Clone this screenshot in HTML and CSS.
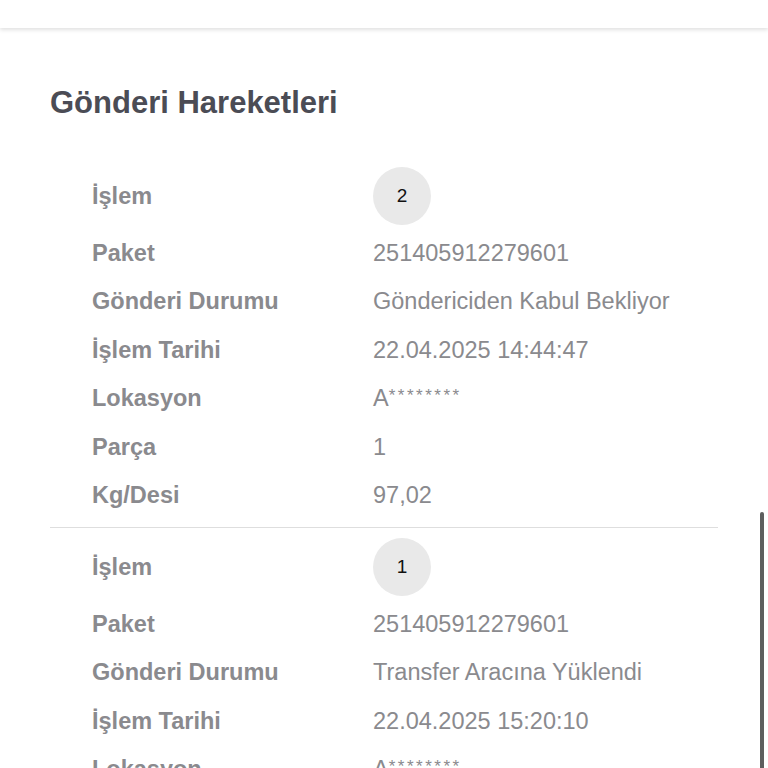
FILE: index.html
```html
<!DOCTYPE html>
<html lang="tr">
  <head>
    <meta charset="UTF-8" />
    <title>Gönderi Hareketleri</title>
    <link rel="stylesheet" href="styles.css">
  </head>
  <body>
    <div class="topbar"></div>

    <div class="content">
      <h1 class="title">Gönderi Hareketleri</h1>

      <!-- Hareket 2 -->
      <div class="move">
        <div class="row row-step">
          <div class="label">İşlem</div>
          <div class="value"><span class="step">2</span></div>
        </div>
        <div class="row">
          <div class="label">Paket</div>
          <div class="value">251405912279601</div>
        </div>
        <div class="row">
          <div class="label">Gönderi Durumu</div>
          <div class="value">Göndericiden Kabul Bekliyor</div>
        </div>
        <div class="row">
          <div class="label">İşlem Tarihi</div>
          <div class="value">22.04.2025 14:44:47</div>
        </div>
        <div class="row">
          <div class="label">Lokasyon</div>
          <div class="value">A<span class="mask">********</span></div>
        </div>
        <div class="row">
          <div class="label">Parça</div>
          <div class="value">1</div>
        </div>
        <div class="row">
          <div class="label">Kg/Desi</div>
          <div class="value">97,02</div>
        </div>
      </div>

      <!-- Hareket 1 -->
      <div class="move">
        <div class="row row-step">
          <div class="label">İşlem</div>
          <div class="value"><span class="step">1</span></div>
        </div>
        <div class="row">
          <div class="label">Paket</div>
          <div class="value">251405912279601</div>
        </div>
        <div class="row">
          <div class="label">Gönderi Durumu</div>
          <div class="value">Transfer Aracına Yüklendi</div>
        </div>
        <div class="row">
          <div class="label">İşlem Tarihi</div>
          <div class="value">22.04.2025 15:20:10</div>
        </div>
        <div class="row">
          <div class="label">Lokasyon</div>
          <div class="value">A<span class="mask">********</span></div>
        </div>
        <div class="row">
          <div class="label">Parça</div>
          <div class="value">1</div>
        </div>
        <div class="row">
          <div class="label">Kg/Desi</div>
          <div class="value">97,02</div>
        </div>
      </div>
    </div>

    <div class="scrollbar"></div>
  </body>
</html>
```

FILE: styles.css
```css
* {
  margin: 0;
  padding: 0;
  box-sizing: border-box;
}

html,
body {
  height: 100%;
  overflow: hidden;
}

body {
  font-family: "Liberation Sans", Arial, sans-serif;
  background-color: #fff;
  color: #8a8a8e;
}

.topbar {
  height: 28px;
  background-color: #fff;
  box-shadow: 0 2px 4px rgba(0, 0, 0, 0.12);
  position: relative;
}

.content {
  padding: 0 50px;
}

.title {
  margin-top: 59px;
  margin-bottom: 44px;
  font-size: 31px;
  line-height: 32px;
  font-weight: bold;
  color: #4b4c55;
}

/* Her hareket bloğu */
.move {
  padding-bottom: 7px;
  border-bottom: 1px solid #dedede;
}

.move + .move {
  padding-top: 6px;
}

.row {
  display: grid;
  grid-template-columns: 281px 1fr;
  align-items: center;
  height: 48.5px;
  padding-left: 42px;
  font-size: 23.5px;
  white-space: nowrap;
}

.row-step {
  height: 66px;
}

.label {
  font-weight: bold;
  color: #8a8a8e;
}

.value {
  color: #8a8a8e;
}

.mask {
  font-size: 17px;
  vertical-align: 5px;
  letter-spacing: 2.5px;
}

.step {
  display: flex;
  align-items: center;
  justify-content: center;
  width: 58px;
  height: 58px;
  border-radius: 50%;
  background-color: #e9e9e9;
  color: #111;
  font-size: 19px;
}

/* kaydırma çubuğu */
.scrollbar {
  position: absolute;
  right: 4px;
  top: 512px;
  width: 4px;
  height: 270px;
  border-radius: 2px;
  background-color: #5e5e5e;
}
```
